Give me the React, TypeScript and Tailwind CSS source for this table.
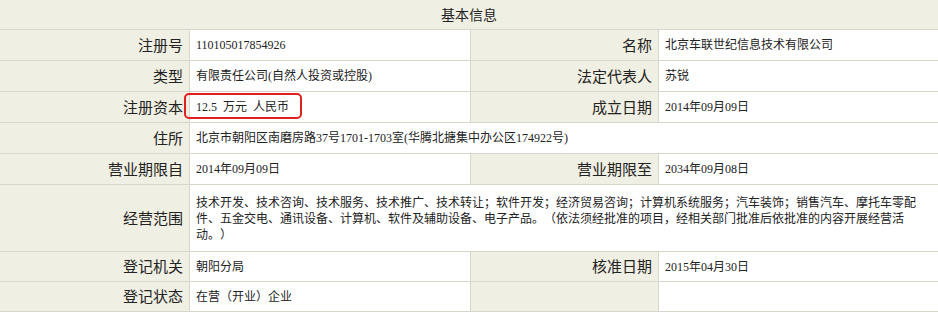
const label = "bg-[#f0efe3] flex items-center justify-end pr-[6px] text-[15px] text-[#222] font-['Noto_Sans_CJK_SC',sans-serif]";
const value = "bg-white flex items-center pl-[6px] text-[12px] text-[#222] font-['Liberation_Serif','Noto_Sans_CJK_SC',serif] [text-spacing-trim:space-all]";

export default function App() {
  return (
    <div className="w-[938px] h-[312px] bg-white overflow-hidden">
      <div className="relative grid grid-cols-[189px_280px_187px_279px] grid-rows-[29px_30px_30px_30px_30px_30px_66px_29px_29px] gap-px bg-[#d8d5ca] pb-px">
        <div className="col-span-4 bg-[#f0efe3] flex items-center justify-center text-[14px] text-[#222] font-['Noto_Sans_CJK_SC',sans-serif]">
          基本信息
        </div>

        <div className={label}>注册号</div>
        <div className={value}>110105017854926</div>
        <div className={label}>名称</div>
        <div className={value}>北京车联世纪信息技术有限公司</div>

        <div className={label}>类型</div>
        <div className={value}>有限责任公司(自然人投资或控股)</div>
        <div className={label}>法定代表人</div>
        <div className={value}>苏锐</div>

        <div className={label}>注册资本</div>
        <div className={value}>12.5{"\u2002"}万元{"\u2002"}人民币</div>
        <div className={label}>成立日期</div>
        <div className={value}>2014年09月09日</div>

        <div className={label}>住所</div>
        <div className={`${value} col-span-3`}>北京市朝阳区南磨房路37号1701-1703室(华腾北搪集中办公区174922号)</div>

        <div className={label}>营业期限自</div>
        <div className={value}>2014年09月09日</div>
        <div className={label}>营业期限至</div>
        <div className={value}>2034年09月08日</div>

        <div className={label}>经营范围</div>
        <div className="col-span-3 bg-white pl-[6px] pt-[10px] text-[12px] leading-[16px] text-[#222] whitespace-nowrap font-['Liberation_Serif','Noto_Sans_CJK_SC',serif] [text-spacing-trim:space-all]">
          技术开发、技术咨询、技术服务、技术推广、技术转让；软件开发；经济贸易咨询；计算机系统服务；汽车装饰；销售汽车、摩托车零配
          <br />
          件、五金交电、通讯设备、计算机、软件及辅助设备、电子产品。（依法须经批准的项目，经相关部门批准后依批准的内容开展经营活
          <br />
          动。）
        </div>

        <div className={label}>登记机关</div>
        <div className={value}>朝阳分局</div>
        <div className={label}>核准日期</div>
        <div className={value}>2015年04月30日</div>

        <div className={label}>登记状态</div>
        <div className={value}>在营（开业）企业</div>
        <div className={label}></div>
        <div className={value}></div>

        <div className="absolute left-[184px] top-[93px] w-[118px] h-[26px] rounded-[5px] border-2 border-[#e0201e]" />
      </div>
    </div>
  );
}
